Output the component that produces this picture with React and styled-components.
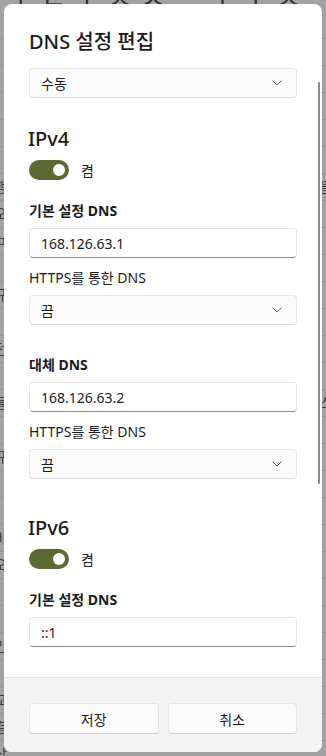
import React from 'react'
import styled, { createGlobalStyle } from 'styled-components'

const GlobalStyle = createGlobalStyle`
  html, body {
    margin: 0;
    padding: 0;
    background: #a2a2a2;
    font-family: "Noto Sans", "Noto Sans CJK KR", sans-serif;
  }
`

function Chevron() {
  return (
    <svg width="10" height="6" viewBox="0 0 10 6">
      <polyline points="0.5,0.5 5,5 9.5,0.5" fill="none" stroke="#5c5c5c" strokeWidth="1" />
    </svg>
  )
}

function Select({ value }) {
  return (
    <SelectBox>
      <span>{value}</span>
      <Chevron />
    </SelectBox>
  )
}

function Toggle({ label }) {
  return (
    <ToggleRow>
      <Track>
        <Knob />
      </Track>
      <span>{label}</span>
    </ToggleRow>
  )
}

// blurred settings page behind the dialog
const backdropRows = [
  ['', ''], ['1', ''], ['', ''], ['', ''], ['1', ''], ['', ''], ['행', '을'], ['오', ''],
  ['ㅁ', ''], ['', ''], ['규', ''], ['', ''], ['전', ''], ['', ''], ['들', '스'],
  ['', ''], ['규', ''], ['', ''], ['', ''], ['비', ''], ['오', ''], ['', ''], ['', ''],
  ['인', ''], ['', ''], ['교', ''], ['결', ''], ['산', ''],
]

export default function App() {
  return (
    <>
      <GlobalStyle />
      <Page>
        <Backdrop>
          <BackTitle>꾸 ㄷ ㅣ ㅈ ㅅ&nbsp;&nbsp;&nbsp;&nbsp;&nbsp;&nbsp;ㅣ ㅣ ㅈ</BackTitle>
          {backdropRows.map(([l, r], i) => (
            <BackRow key={i}>
              <span>{l}</span>
              <span>{r}</span>
            </BackRow>
          ))}
        </Backdrop>
        <Dialog>
          <Body>
            <Title>DNS 설정 편집</Title>
            <Select value="수동" />
            <Heading>IPv4</Heading>
            <Toggle label="켬" />
            <Label>기본 설정 DNS</Label>
            <Input>168.126.63.1</Input>
            <SubLabel>HTTPS를 통한 DNS</SubLabel>
            <Select value="끔" />
            <Label $gap={30}>대체 DNS</Label>
            <Input>168.126.63.2</Input>
            <SubLabel>HTTPS를 통한 DNS</SubLabel>
            <Select value="끔" />
            <Heading $gap={35}>IPv6</Heading>
            <Toggle label="켬" />
            <Label>기본 설정 DNS</Label>
            <Input>::1</Input>
            <Scrollbar />
          </Body>
          <Footer>
            <Button>저장</Button>
            <Button>취소</Button>
          </Footer>
        </Dialog>
      </Page>
    </>
  )
}

const Page = styled.div`
  position: relative;
  width: 326px;
  height: 756px;
  overflow: hidden;
  background: #a2a2a2;
`
const Backdrop = styled.div`
  display: flex;
  flex-direction: column;
  filter: blur(0.6px);
  color: #3d3d3d;
`
const BackTitle = styled.div`
  font-size: 28px;
  line-height: 28px;
  margin-top: -16px;
  padding-left: 8px;
  color: #333;
  white-space: nowrap;
`
const BackRow = styled.div`
  height: 26px;
  display: flex;
  justify-content: space-between;
  font-size: 14px;
  line-height: 26px;
  margin: 0 -6px;
  border-bottom: 1px solid #959595;
`
const Dialog = styled.div`
  position: absolute;
  top: 4px;
  left: 4px;
  width: 318px;
  height: 748px;
  background: #ffffff;
  border-radius: 8px;
  display: flex;
  flex-direction: column;
  overflow: hidden;
  color: #1b1b1b;
`
const Body = styled.div`
  position: relative;
  flex: 1;
  display: flex;
  flex-direction: column;
  padding: 24px 25px 0 25px;
  overflow: hidden;
`
const Title = styled.div`
  font-size: 20px;
  line-height: 28px;
  font-weight: 500;
  margin-bottom: 12px;
`
const SelectBox = styled.div`
  height: 28px;
  flex-shrink: 0;
  display: flex;
  align-items: center;
  justify-content: space-between;
  padding: 0 14px 0 11px;
  border: 1px solid #e6e6e6;
  border-bottom-color: #d6d6d6;
  border-radius: 4px;
  background: #fbfbfb;
  font-size: 14px;
`
const Heading = styled.div`
  font-size: 20px;
  line-height: 28px;
  font-weight: 500;
  margin-top: ${p => p.$gap || 27}px;
  margin-left: -1px;
`
const ToggleRow = styled.div`
  display: flex;
  align-items: center;
  gap: 12px;
  margin-top: 7px;
  font-size: 14px;
  height: 20px;
`
const Track = styled.div`
  width: 40px;
  height: 20px;
  border-radius: 10px;
  background: #5a6a32;
  display: flex;
  align-items: center;
  justify-content: flex-end;
  padding-right: 4px;
  box-sizing: border-box;
`
const Knob = styled.div`
  width: 12px;
  height: 12px;
  border-radius: 50%;
  background: #ffffff;
`
const Label = styled.div`
  font-size: 14px;
  line-height: 20px;
  font-weight: 700;
  margin-top: ${p => p.$gap || 21}px;
  margin-bottom: 7px;
`
const SubLabel = styled.div`
  font-size: 14px;
  line-height: 20px;
  margin-top: 10px;
  margin-bottom: 7px;
`
const Input = styled.div`
  height: 28px;
  flex-shrink: 0;
  display: flex;
  align-items: center;
  padding: 0 11px;
  border: 1px solid #e6e6e6;
  border-bottom: 1px solid #8a8a8a;
  border-radius: 4px;
  background: #ffffff;
  font-size: 14px;
`
const Scrollbar = styled.div`
  position: absolute;
  right: 2px;
  top: 78px;
  width: 2px;
  height: 402px;
  border-radius: 1px;
  background: #8a8a8a;
`
const Footer = styled.div`
  flex-shrink: 0;
  height: 75px;
  box-sizing: border-box;
  padding: 25px 25px 0 25px;
  background: #f3f3f3;
  border-top: 1px solid #e5e5e5;
  display: grid;
  grid-template-columns: 1fr 1fr;
  column-gap: 9px;
  align-items: start;
`
const Button = styled.div`
  height: 29px;
  display: flex;
  align-items: center;
  justify-content: center;
  border: 1px solid #e5e5e5;
  border-bottom-color: #d0d0d0;
  border-radius: 4px;
  background: #fbfbfb;
  font-size: 14px;
  color: #1b1b1b;
`
